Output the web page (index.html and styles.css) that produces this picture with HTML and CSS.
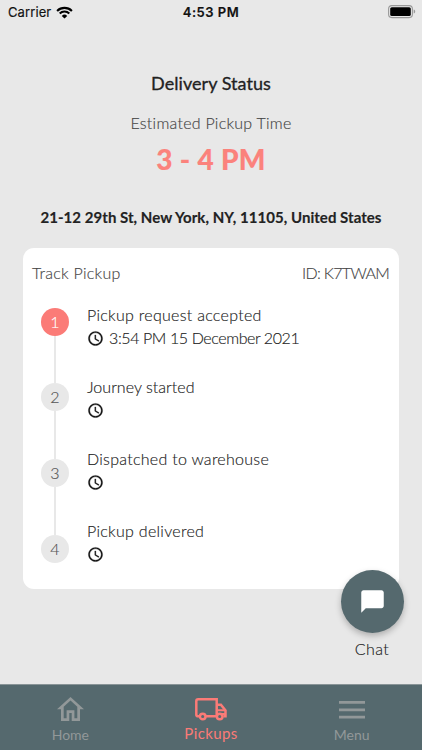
FILE: index.html
```html
<!DOCTYPE html>
<html lang="en">
<head>
<meta charset="utf-8">
<title>Delivery Status</title>
<link rel="stylesheet" href="styles.css">
</head>
<body>
<svg class="defs" width="0" height="0" aria-hidden="true">
  <symbol id="clock" viewBox="0 0 24 24"><path d="M11.990 2C6.470 2 2 6.480 2 12s4.470 10 9.990 10C17.520 22 22 17.520 22 12S17.520 2 11.990 2zM12 20c-4.420 0-8-3.580-8-8s3.580-8 8-8 8 3.580 8 8-3.580 8-8 8zM12.500 7H11v6l5.250 3.150.75-1.230-4.500-2.670z"/></symbol>
</svg>
<div class="screen">
  <div class="statusbar">
    <div class="carrier"><span>Carrier</span>
      <svg class="wifi" viewBox="0 0 17 13"><path d="M1.100 4.900A10.600 10.600 0 0 1 15.900 4.900M3.700 7.500A6.900 6.900 0 0 1 13.300 7.500" fill="none" stroke="#000" stroke-width="2.100"/><path d="M8.500 12.600 5.800 9.900a3.900 3.900 0 0 1 5.400 0z"/></svg>
    </div>
    <div class="clock">4:53 PM</div>
    <div class="power"><svg class="battery" viewBox="0 0 28 14"><rect x=".6" y=".6" width="23.800" height="12" rx="3.300" fill="none" stroke="#999" stroke-width="1.100"/><rect x="2.200" y="2.200" width="20.600" height="8.800" rx="1.600"/><path d="M25.700 4.600c2 .5 2 3.500 0 4z" fill="#999"/></svg></div>
  </div>
  <main class="content">
    <h1 class="title">Delivery Status</h1>
    <p class="caption">Estimated Pickup Time</p>
    <p class="time">3 - 4 PM</p>
    <p class="address">21-12 29th St, New York, NY, 11105, United States</p>
    <section class="card">
      <header class="card-head"><span class="track">Track Pickup</span><span class="order">ID: K7TWAM</span></header>
      <div class="tracker">
        <div class="rail">
          <div class="dot active">1</div><div class="line"></div>
          <div class="dot">2</div><div class="line"></div>
          <div class="dot">3</div><div class="line"></div>
          <div class="dot">4</div>
        </div>
        <div class="steps">
          <div class="step"><div class="name">Pickup request accepted</div><div class="when"><svg><use href="#clock"/></svg><span>3:54 PM 15 December 2021</span></div></div>
          <div class="step"><div class="name started">Journey started</div><div class="when"><svg><use href="#clock"/></svg></div></div>
          <div class="step"><div class="name">Dispatched to warehouse</div><div class="when"><svg><use href="#clock"/></svg></div></div>
          <div class="step"><div class="name">Pickup delivered</div><div class="when"><svg><use href="#clock"/></svg></div></div>
        </div>
      </div>
    </section>
  </main>
  <div class="chat">
    <div class="fab"><svg viewBox="0 0 24 24"><path d="M20 2H4c-1.100 0-1.990.9-1.990 2L2 22l4-4h14c1.100 0 2-.9 2-2V4c0-1.100-.9-2-2-2z" fill="#fff"/></svg></div>
    <span>Chat</span>
  </div>
  <nav class="tabs">
    <div class="tab"><svg class="home" viewBox="0 0 27 24"><path fill-rule="evenodd" d="M13.500 0 0 12.200h4V24h8.300v-8h2.400v8H23V12.200h4zM13.500 3.600 20.300 9.800V21.300h-2.900v-8H9.600v8H6.700V9.800z"/></svg><span>Home</span></div>
    <div class="tab current"><svg class="truck" viewBox="0 0 32 23"><g fill="none" stroke="currentColor" stroke-width="2.500"><path d="M4.500 18.300H3.200c-1.200 0-1.900-.7-1.900-1.900V3.300c0-1.300.7-2 1.900-2h18.500v17H11M21.700 6.800h4.200l4.600 5.700v5.800h-2"/><circle cx="7.700" cy="18.500" r="2.800"/><circle cx="24.700" cy="18.500" r="2.800"/></g><path d="M22 11.300h8.500v2H22zM21 15h9v2h-9z"/></svg><span>Pickups</span></div>
    <div class="tab"><svg class="menu" viewBox="0 0 26 18"><path d="M0 0h26v2.800H0zM0 7.400h26v2.800H0zM0 14.700h26v2.800H0z"/></svg><span>Menu</span></div>
  </nav>
</div>
</body>
</html>
```
FILE: styles.css
```css
* { box-sizing: border-box; }
body, h1, p { margin: 0; }
body { background: #e8e8e8; color: #222; font: 300 16px/24px Lato, sans-serif; }
.defs { position: absolute; }
svg { display: block; }
.screen { position: relative; width: 422px; height: 750px; display: flex; flex-direction: column; overflow: hidden; white-space: nowrap; -webkit-text-stroke: .15px; }

.statusbar { height: 24px; display: grid; grid-template-columns: 1fr auto 1fr; padding: 0 6px 0 8px; align-items: center; color: #111; font: 400 13px/24px Inter, sans-serif; }
.carrier { display: flex; align-items: center; gap: 5px; letter-spacing: .1px; }
.wifi { width: 17px; height: 13px; }
.clock { margin-right: 2px; font-weight: 600; letter-spacing: .5px; }
.power { display: flex; justify-content: flex-end; }
.battery { width: 28px; height: 14px; }

.content { flex: 1; padding: 47px 23px 0; text-align: center; }
.title { font-size: 18px; line-height: 24px; font-weight: 400; letter-spacing: .05px; -webkit-text-stroke: .3px; }
.caption { margin-top: 16px; color: #444; letter-spacing: .25px; }
.time { margin-top: 8px; font-size: 28px; line-height: 32px; font-weight: 900; letter-spacing: .3px; color: #fb827c; }
.address { margin-top: 30px; font-size: 15px; font-weight: 700; letter-spacing: .04px; }

.card { margin-top: 19px; height: 340.500px; border-radius: 11px; background: #fff; text-align: left; padding: 13px 10px 0 9px; }
.card-head { display: flex; justify-content: space-between; color: #444; }
.track { letter-spacing: .25px; }
.order { letter-spacing: -.7px; }
.tracker { display: flex; padding: 17.500px 0 0 9px; }
.rail { width: 28px; display: flex; flex-direction: column; align-items: center; padding-top: 5px; }
.dot { width: 28px; height: 28px; border-radius: 50%; background: #e8e8e8; color: #555; text-align: center; line-height: 28px; }
.dot.active { background: #fb7b77; color: #fff; }
.line { width: 2px; height: 47.700px; background: #e8e8e8; }
.steps { margin-left: 18px; }
.step { height: 72.200px; }
.name { letter-spacing: .28px; }
.started { letter-spacing: .04px; }
.when { display: flex; align-items: center; gap: 5px; height: 23px; letter-spacing: -.4px; }
.when svg { width: 17px; height: 17px; fill: #111; stroke: #111; stroke-width: .4px; }

.chat { position: absolute; left: 340px; top: 570px; width: 64px; display: flex; flex-direction: column; align-items: center; gap: 4px; letter-spacing: .4px; }
.fab { width: 63px; height: 63px; border-radius: 50%; background: #55696e; display: grid; place-items: center; box-shadow: 0 3px 6px rgba(0,0,0,.25); }
.fab svg { width: 27px; height: 27px; }

.tabs { height: 66px; background: #55696e; border-top: 1px solid #899497; display: grid; grid-template-columns: repeat(3, 1fr); color: #929899; fill: currentColor; font-size: 14px; -webkit-text-stroke: 0; }
.tab { display: flex; flex-direction: column; align-items: center; font-weight: 400; }
.tab span { line-height: 20px; }
.home { width: 27px; height: 24px; margin: 12px 0 4px; }
.truck { width: 32px; height: 23px; margin: 13px 0 2px; }
.menu { width: 26px; height: 18px; margin: 16px 0 6px; }
.current { color: #fb7b77; fill: currentColor; font-size: 15px; letter-spacing: .4px; }
```
